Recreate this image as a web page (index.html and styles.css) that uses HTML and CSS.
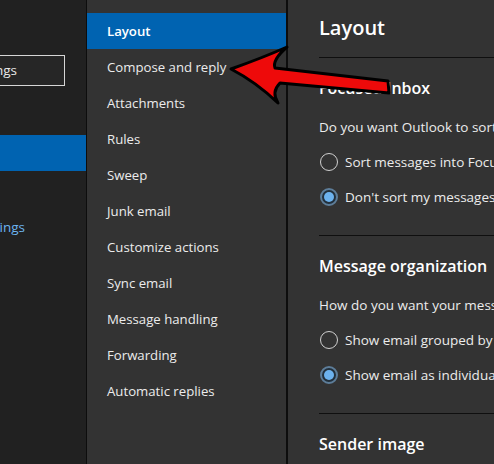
FILE: index.html
```html
<!DOCTYPE html>
<html>
<head>
<meta charset="utf-8">
<link rel="stylesheet" href="styles.css">
</head>
<body>
<div class="app">
  <aside class="sidebar">
    <div class="search">Search Outlook settings</div>
    <div class="side-nav">
      <div class="side-item">General</div>
      <div class="side-item active">Mail</div>
      <div class="side-item">Calendar</div>
    </div>
    <div class="side-link">View quick settings</div>
  </aside>
  <nav class="menu">
    <div class="menu-item selected">Layout</div>
    <div class="menu-item">Compose and reply</div>
    <div class="menu-item">Attachments</div>
    <div class="menu-item">Rules</div>
    <div class="menu-item">Sweep</div>
    <div class="menu-item">Junk email</div>
    <div class="menu-item">Customize actions</div>
    <div class="menu-item">Sync email</div>
    <div class="menu-item">Message handling</div>
    <div class="menu-item">Forwarding</div>
    <div class="menu-item">Automatic replies</div>
  </nav>
  <main class="content">
    <h1 class="title">Layout</h1>
    <section class="section">
      <h2 class="section-title">Focused Inbox</h2>
      <p class="desc">Do you want Outlook to sort your email into Focused and Other?</p>
      <div class="radio-row"><span class="radio"></span><span class="label">Sort messages into Focused and Other</span></div>
      <div class="radio-row"><span class="radio checked"></span><span class="label">Don't sort my messages</span></div>
    </section>
    <section class="section">
      <h2 class="section-title">Message organization</h2>
      <p class="desc">How do you want your messages to be organized?</p>
      <div class="radio-row"><span class="radio"></span><span class="label">Show email grouped by conversation</span></div>
      <div class="radio-row"><span class="radio checked"></span><span class="label">Show email as individual messages</span></div>
    </section>
    <section class="section">
      <h2 class="section-title">Sender image</h2>
    </section>
  </main>
</div>
<svg class="arrow" width="494" height="464" viewBox="0 0 494 464">
  <path d="M231,69 Q262,58 287,47 Q272,60 275,68 L388,81 L389,93 L280,83 Q271,92 278,103 Q256,82 231,69 Z" fill="#ee0a0a" stroke="#000" stroke-width="3" stroke-linejoin="round"/>
</svg>
</body>
</html>
```
FILE: styles.css
```css
html, body {
  margin: 0;
  padding: 0;
}
body {
  width: 494px;
  height: 464px;
  overflow: hidden;
  background: #333333;
  font-family: "Open Sans", "Noto Sans", sans-serif;
  color: #f0f0f0;
  position: relative;
}
.app {
  display: flex;
  height: 464px;
}
.sidebar {
  width: 86px;
  flex: none;
  background: #212121;
  border-right: 1px solid #0d0d0d;
  overflow: hidden;
  padding-top: 55px;
}
.search {
  width: 200px;
  margin-left: -135px;
  height: 31px;
  box-sizing: border-box;
  border: 1px solid #d6d6d6;
  background: #262626;
  text-align: right;
  padding-right: 47px;
  line-height: 29px;
  font-size: 13.5px;
  white-space: nowrap;
  color: #e8e8e8;
}
.side-nav {
  margin-top: 13px;
}
.side-item {
  height: 36px;
  line-height: 36px;
  font-size: 13px;
  white-space: nowrap;
  color: transparent;
}
.side-item.active {
  background: #0063b1;
}
.side-link {
  width: 200px;
  margin-left: -135px;
  margin-top: 10px;
  text-align: right;
  padding-right: 40px;
  box-sizing: border-box;
  white-space: nowrap;
  font-size: 13.5px;
  line-height: 20px;
  color: #6cb4f0;
}
.menu {
  width: 199px;
  flex: none;
  background: #333333;
  border-right: 2px solid #0d0d0d;
  padding-top: 13px;
}
.menu-item {
  height: 36px;
  line-height: 36px;
  padding-left: 20px;
  font-size: 13.2px;
  color: #ececec;
  white-space: nowrap;
}
.menu-item.selected {
  background: #0063b1;
  font-weight: 600;
  color: #ffffff;
}
.content {
  flex: 1;
  background: #333333;
  padding-left: 31px;
  overflow: hidden;
}
.title {
  margin: 14px 0 0 0;
  font-size: 20px;
  line-height: 28px;
  font-weight: 600;
  color: #ffffff;
  padding-bottom: 15px;
  border-bottom: 1px solid #0f0f0f;
}
.section {
  border-bottom: 1px solid #0f0f0f;
  padding-bottom: 21px;
}
.section-title {
  margin: 18px 0 0 0;
  font-size: 16px;
  line-height: 24px;
  font-weight: 600;
  color: #ffffff;
  white-space: nowrap;
}
.desc {
  margin: 17px 0 0 0;
  font-size: 13.5px;
  line-height: 20px;
  white-space: nowrap;
  color: #ececec;
}
.radio-row {
  display: flex;
  align-items: center;
  gap: 7px;
  height: 35px;
  white-space: nowrap;
  font-size: 13.5px;
  color: #ececec;
}
.desc + .radio-row {
  margin-top: 7px;
}
.radio {
  width: 18px;
  height: 18px;
  box-sizing: border-box;
  border: 1px solid #d0d0d0;
  border-radius: 50%;
  margin-left: 1px;
  flex: none;
  position: relative;
}
.radio.checked {
  border: 2px solid #5d7d99;
  background: #22303c;
}
.radio.checked::after {
  content: "";
  position: absolute;
  left: 2px;
  top: 2px;
  width: 10px;
  height: 10px;
  border-radius: 50%;
  background: #6cb2ee;
}
.arrow {
  position: absolute;
  left: 0;
  top: 0;
  pointer-events: none;
}
```
